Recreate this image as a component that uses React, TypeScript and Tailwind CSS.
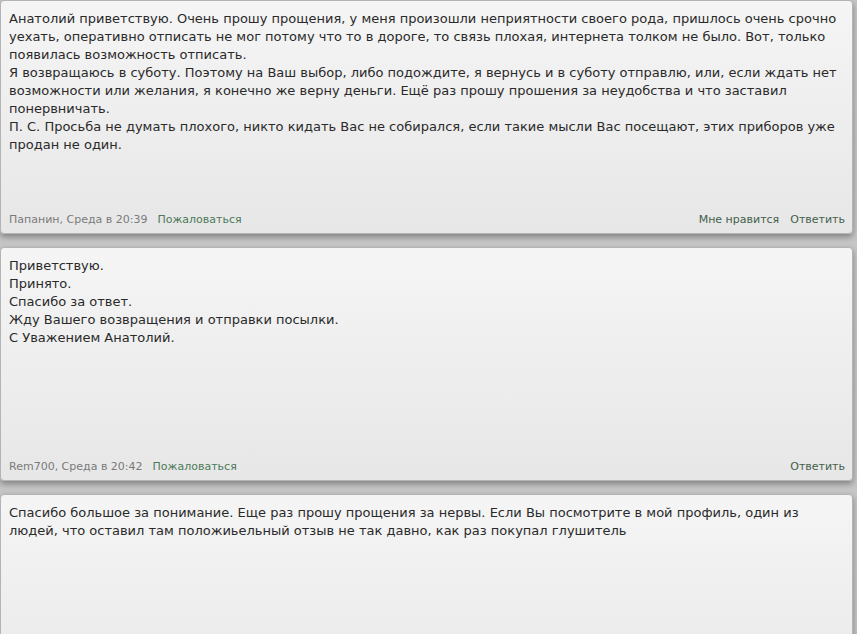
import React from "react";

const font = { fontFamily: '"DejaVu Sans", Verdana, sans-serif' };

function Card({
  lines,
  author,
  like,
}: {
  lines: string[];
  author?: string;
  like?: boolean;
}) {
  return (
    <div className="shrink-0 mr-[4px] h-[234px] rounded-[4px] border border-[#b4b4b4] bg-gradient-to-b from-[#f5f5f5] to-[#e7e7e7] shadow-[0_3px_6px_rgba(0,0,0,0.35)] flex flex-col">
      <div className="px-[8px] pt-[9px] text-[13px] leading-[18px] text-[#2a2a2a] flex-1">
        {lines.map((l, i) => (
          <div key={i} className="whitespace-nowrap">
            {l}
          </div>
        ))}
      </div>
      {author && (
        <div className="flex items-center pl-[8px] pr-[7px] pb-[5px] text-[11px] leading-[16px]">
          <span className="text-[#7a7a7a]">{author}</span>
          <span className="ml-[10px] text-[#4d7a5a]">Пожаловаться</span>
          <span className="flex-1" />
          {like && <span className="text-[#44604c]">Мне нравится</span>}
          <span className="ml-[11px] text-[#44604c]">Ответить</span>
        </div>
      )}
    </div>
  );
}

export default function App() {
  return (
    <div
      className="h-[634px] w-[857px] overflow-hidden bg-[#c6c6c6] flex flex-col gap-[13px]"
      style={font}
    >
      <Card
        lines={[
          "Анатолий приветствую. Очень прошу прощения, у меня произошли неприятности своего рода, пришлось очень срочно",
          "уехать, оперативно отписать не мог потому что то в дороге, то связь плохая, интернета толком не было. Вот, только",
          "появилась возможность отписать.",
          "Я возвращаюсь в суботу. Поэтому на Ваш выбор, либо подождите, я вернусь и в суботу отправлю, или, если ждать нет",
          "возможности или желания, я конечно же верну деньги. Ещё раз прошу прошения за неудобства и что заставил",
          "понервничать.",
          "П. С. Просьба не думать плохого, никто кидать Вас не собирался, если такие мысли Вас посещают, этих приборов уже",
          "продан не один.",
        ]}
        author="Папанин, Среда в 20:39"
        like
      />
      <Card
        lines={[
          "Приветствую.",
          "Принято.",
          "Спасибо за ответ.",
          "Жду Вашего возвращения и отправки посылки.",
          "С Уважением Анатолий.",
        ]}
        author="Rem700, Среда в 20:42"
      />
      <Card
        lines={[
          "Спасибо большое за понимание. Еще раз прошу прощения за нервы. Если Вы посмотрите в мой профиль, один из",
          "людей, что оставил там положиьельный отзыв не так давно, как раз покупал глушитель",
        ]}
      />
    </div>
  );
}
